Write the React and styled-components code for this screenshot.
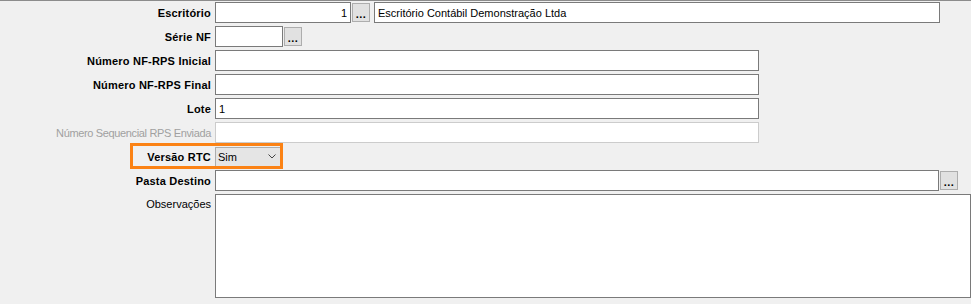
import styled, { createGlobalStyle } from 'styled-components'

const GlobalStyle = createGlobalStyle`
	html, body {
		margin: 0;
		background: #f0f0f0;
		overflow: hidden;
	}
	body {
		font-family: "Liberation Sans", Arial, sans-serif;
		font-size: 11px;
		color: #000;
	}
`

export default function App () {
	return (
		<>
			<GlobalStyle />
			<Panel>
				<Row>
					<Label>Escritório</Label>
					<Field $width={136} $align='right' readOnly defaultValue='1' />
					<LookupButton>...</LookupButton>
					<Field $width={566} $gap={4} readOnly defaultValue='Escritório Contábil Demonstração Ltda' />
				</Row>
				<Row>
					<Label>Série NF</Label>
					<Field $width={68} readOnly defaultValue='' />
					<LookupButton>...</LookupButton>
				</Row>
				<Row>
					<Label>Número NF-RPS Inicial</Label>
					<Field $width={544} readOnly defaultValue='' />
				</Row>
				<Row>
					<Label>Número NF-RPS Final</Label>
					<Field $width={544} readOnly defaultValue='' />
				</Row>
				<Row>
					<Label>Lote</Label>
					<Field $width={544} readOnly defaultValue='1' />
				</Row>
				<Row>
					<Label $disabled>Número Sequencial RPS Enviada</Label>
					<Field $width={544} $disabled disabled defaultValue='' />
				</Row>
				<Row $highlight>
					<Label>Versão RTC</Label>
					<Combo>
						<span>Sim</span>
						<svg width='8' height='5' viewBox='0 0 8 5'>
							<polyline points='0.5,0.5 4,4 7.5,0.5' fill='none' stroke='#444' strokeWidth='1' />
						</svg>
					</Combo>
				</Row>
				<Row>
					<Label>Pasta Destino</Label>
					<Field $width={724} readOnly defaultValue='' />
					<LookupButton>...</LookupButton>
				</Row>
				<Row $tall>
					<Label $plain>Observações</Label>
					<Memo readOnly defaultValue='' />
				</Row>
			</Panel>
		</>
	)
}

const Panel = styled.div`
	border-top: 1px solid #8c8c8c;
	padding-top: 1px;
	display: flex;
	flex-direction: column;
	gap: 3px;
	height: 303px;
	box-sizing: border-box;
`

const Row = styled.div`
	position: relative;
	display: flex;
	align-items: ${p => p.$tall ? 'flex-start' : 'center'};
	height: ${p => p.$tall ? '104px' : '21px'};
	flex: none;

	${p => p.$highlight && `
		&::before {
			content: '';
			position: absolute;
			left: 130px;
			top: -3px;
			width: 153px;
			height: 26px;
			box-sizing: border-box;
			border: 3px solid #fb8214;
			pointer-events: none;
		}
	`}
`

const Label = styled.div`
	width: 215px;
	flex: none;
	box-sizing: border-box;
	padding-right: 4px;
	padding-top: ${p => p.$plain ? '4px' : '0'};
	text-align: right;
	white-space: nowrap;
	font-weight: ${p => (p.$disabled || p.$plain) ? 400 : 700};
	letter-spacing: ${p => p.$disabled ? '-0.35px' : p.$plain ? '0' : '0.2px'};
	color: ${p => p.$disabled ? '#a0a0a0' : '#000'};
`

const Field = styled.input`
	width: ${p => p.$width}px;
	height: 21px;
	margin: 0 0 0 ${p => p.$gap || 0}px;
	box-sizing: border-box;
	border: 1px solid ${p => p.$disabled ? '#cccccc' : '#7a7a7a'};
	background: #fff;
	padding: 0 3px;
	font: 11px "Liberation Sans", Arial, sans-serif;
	color: #000;
	text-align: ${p => p.$align || 'left'};
	outline: none;
`

const LookupButton = styled.div`
	width: 18px;
	height: 19px;
	margin-left: 1px;
	box-sizing: border-box;
	background: #e1e1e1;
	border: 1px solid #adadad;
	display: flex;
	align-items: flex-end;
	justify-content: center;
	font-size: 11px;
	font-weight: 700;
	line-height: 1;
	letter-spacing: 0.5px;
	padding-bottom: 1px;
`

const Combo = styled.div`
	width: 66px;
	height: 20px;
	box-sizing: border-box;
	background: #e5e5e5;
	border: 1px solid #adadad;
	display: flex;
	align-items: center;
	justify-content: space-between;
	padding: 0 4px 0 2px;
	font-size: 11px;
`

const Memo = styled.textarea`
	width: 770px;
	height: 104px;
	margin: 0;
	box-sizing: border-box;
	border: 1px solid #7a7a7a;
	background: #fff;
	resize: none;
	outline: none;
	font: 11px "Liberation Sans", Arial, sans-serif;
`
